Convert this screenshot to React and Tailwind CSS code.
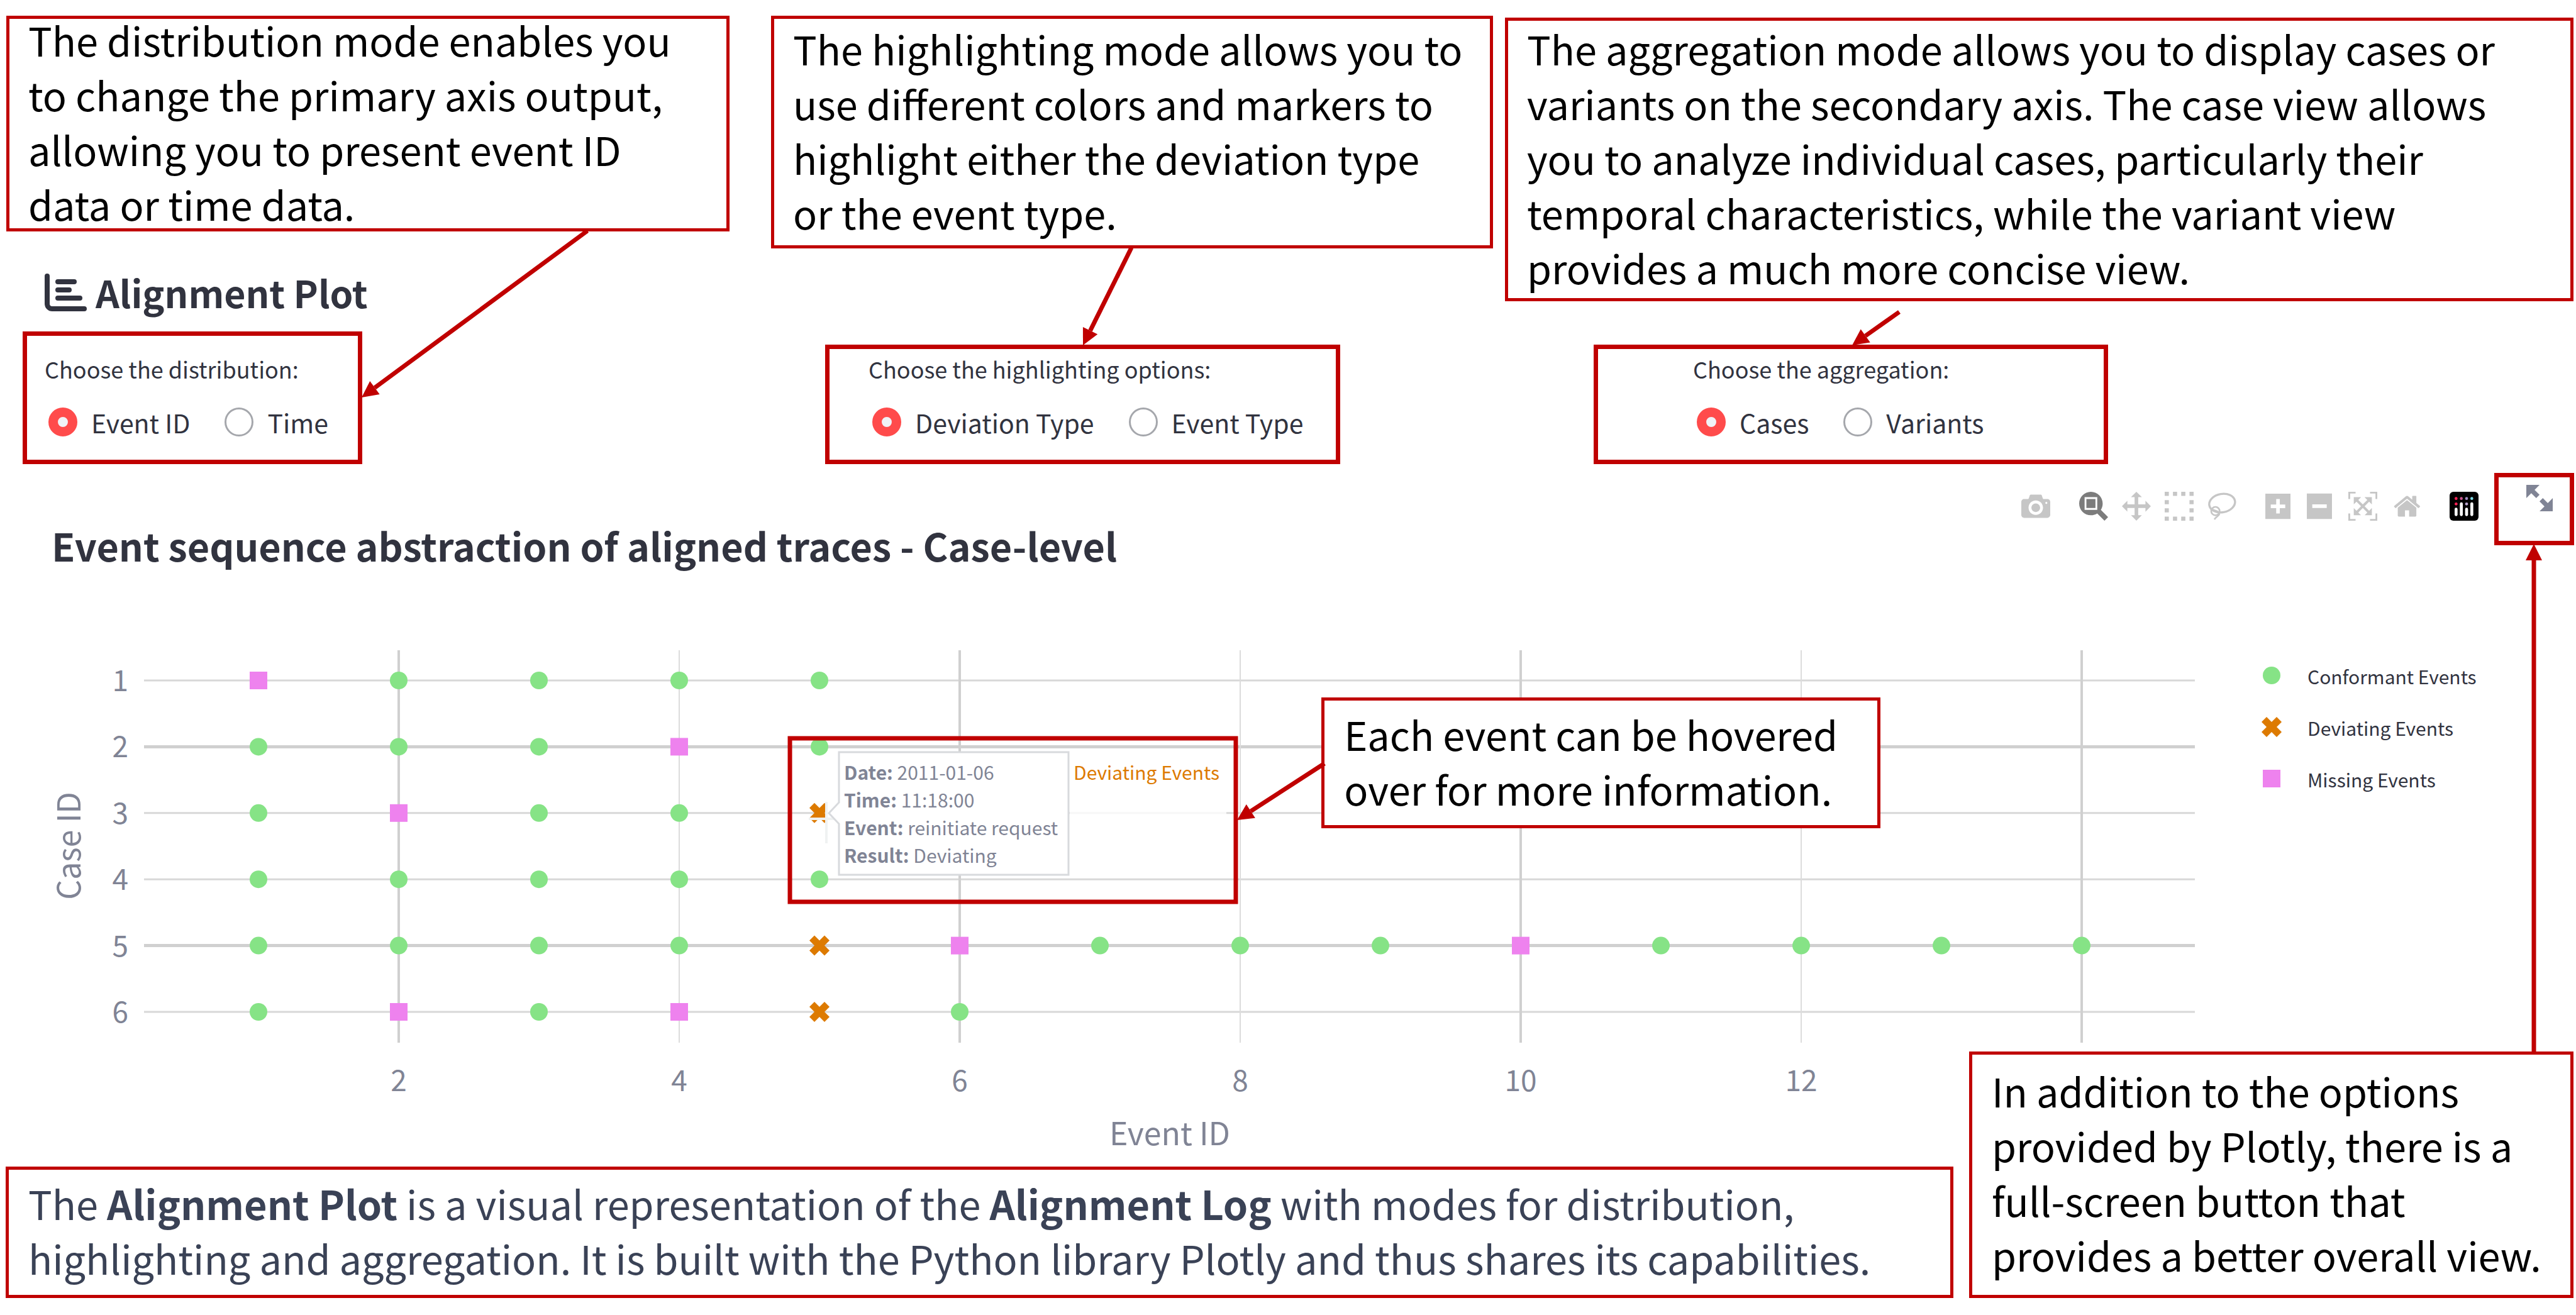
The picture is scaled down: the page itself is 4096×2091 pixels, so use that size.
import React from "react";

const FONT = "font-['Noto_Sans_CJK_SC','Open_Sans',sans-serif]";

const ICONS = {
  camera: {
    w: 1000,
    d: "m500 450c-83 0-150-67-150-150 0-83 67-150 150-150 83 0 150 67 150 150 0 83-67 150-150 150z m400 150h-120c-16 0-34 13-39 29l-31 93c-6 15-23 28-40 28h-340c-16 0-34-13-39-28l-31-94c-6-15-23-28-40-28h-120c-55 0-100-45-100-100v-450c0-55 45-100 100-100h800c55 0 100 45 100 100v450c0 55-45 100-100 100z m-400-550c-138 0-250 112-250 250 0 138 112 250 250 250 138 0 250-112 250-250 0-138-112-250-250-250z m365 380c-19 0-35 16-35 35 0 19 16 35 35 35 19 0 35-16 35-35 0-19-16-35-35-35z",
  },
  zoom: {
    w: 1000,
    d: "m1000-25l-250 251c40 63 63 138 63 218 0 224-182 406-407 406-224 0-406-182-406-406s183-406 407-406c80 0 155 22 218 62l250-250 125 125z m-812 250l0 438 437 0 0-438-437 0z m62 375l313 0 0-312-313 0 0 312z",
  },
  pan: {
    w: 1000,
    d: "m1000 350l-187 188 0-125-250 0 0 250 125 0-188 187-187-187 125 0 0-250-250 0 0 125-188-188 186-187 0 125 252 0 0-250-125 0 187-188 188 188-125 0 0 250 250 0 0-126 187 188z",
  },
  select: {
    w: 1000,
    d: "m0 850l0-143 143 0 0 143-143 0z m286 0l0-143 143 0 0 143-143 0z m285 0l0-143 143 0 0 143-143 0z m286 0l0-143 143 0 0 143-143 0z m-857-286l0-143 143 0 0 143-143 0z m857 0l0-143 143 0 0 143-143 0z m-857-285l0-143 143 0 0 143-143 0z m857 0l0-143 143 0 0 143-143 0z m-857-286l0-143 143 0 0 143-143 0z m286 0l0-143 143 0 0 143-143 0z m285 0l0-143 143 0 0 143-143 0z m286 0l0-143 143 0 0 143-143 0z",
  },
  zoomIn: {
    w: 875,
    d: "m1 787l0-875 875 0 0 875-875 0z m687-500l-187 0 0-187-125 0 0 187-188 0 0 125 188 0 0 187 125 0 0-187 187 0 0-125z",
  },
  zoomOut: {
    w: 875,
    d: "m0 788l0-876 875 0 0 876-875 0z m688-500l-500 0 0 125 500 0 0-125z",
  },
  autoscale: {
    w: 1000,
    d: "m250 850l-187 0-63 0 0-62 0-188 63 0 0 188 187 0 0 62z m688 0l-188 0 0-62 188 0 0-188 62 0 0 188 0 62-62 0z m-875-938l0 188-63 0 0-188 0-62 63 0 187 0 0 62-187 0z m875 188l0-188-188 0 0-62 188 0 62 0 0 62 0 188-62 0z m-125 188l-1 0-93-94-156 156 156 156 92-93 2 0 0 250-250 0 0-2 93-92-156-156-156 156 94 92 0 2-250 0 0-250 0 0 93 93 157-156-157-156-93 94 0 0 0-250 250 0 0 0-94 93 156 157 156-157-93-93 0 0 250 0 0 250z",
  },
  home: {
    w: 929,
    d: "m786 296v-267q0-15-11-26t-25-10h-214v214h-143v-214h-214q-15 0-25 10t-11 26v267q0 1 0 2t0 2l321 264 321-264q1-1 1-4z m124 39l-34-41q-5-5-12-6h-2q-7 0-12 3l-386 322-386-322q-7-4-13-4-7 2-12 7l-35 41q-4 5-3 13t6 12l401 334q18 15 42 15t43-15l136-114v109q0 8 5 13t13 5h107q8 0 13-5t5-13v-227l122-102q5-5 6-12t-4-13z",
  },
};

function ModeButton({ icon, label, active }) {
  const { w, d } = ICONS[icon];
  return (
    <button type="button" aria-label={label} className={active ? "text-[#7c7c7c]" : "text-[#c6c6c6]"}>
      <svg viewBox={`0 0 ${w} 1000`} className="block h-[46px] w-auto" fill="currentColor">
        <path transform="matrix(1 0 0 -1 0 850)" d={d} />
      </svg>
    </button>
  );
}

function LassoButton() {
  return (
    <button type="button" aria-label="Lasso Select" className="text-[#c6c6c6]">
      <svg viewBox="0 0 138 138" className="block size-[46px]" fill="none" stroke="currentColor">
        <ellipse cx="70" cy="54" rx="62" ry="44" strokeWidth="10" transform="rotate(-10 70 54)" />
        <circle cx="38" cy="92" r="20" strokeWidth="8" />
        <path d="M18 80C30 92 62 92 56 108C52 116 40 120 33 132" strokeWidth="8" />
      </svg>
    </button>
  );
}

function PlotlyLogo() {
  return (
    <a href="https://plotly.com/" aria-label="Produced with Plotly">
      <svg viewBox="0 0 138 138" className="block size-[46px]">
        <rect width="138" height="138" rx="18" />
        <circle cx="31" cy="32" r="7" fill="#ff2257" />
        <circle cx="56" cy="32" r="7" fill="#c9558f" />
        <circle cx="81" cy="32" r="7" fill="#a28fc4" />
        <circle cx="106" cy="32" r="7" fill="#7fdbe6" />
        <circle cx="31" cy="58" r="7" fill="#ff2257" />
        <circle cx="81" cy="58" r="7" fill="#b9a6d0" />
        <g fill="#fff">
          <rect x="24" y="76" width="14" height="40" rx="7" />
          <rect x="49" y="50" width="14" height="66" rx="7" />
          <rect x="74" y="76" width="14" height="40" rx="7" />
          <rect x="99" y="50" width="14" height="66" rx="7" />
        </g>
      </svg>
    </a>
  );
}

function Callout({ className, lines }) {
  return (
    <aside className={`border-[5px] border-[#c00000] bg-white ${className}`}>
      {lines.map((line, i) => (
        <p key={i} className="text-[63px] leading-[87px] whitespace-nowrap">
          {line}
        </p>
      ))}
    </aside>
  );
}

function RadioGroup({ name, label, options, className }) {
  return (
    <div
      role="radiogroup"
      aria-labelledby={`${name}-label`}
      className={`border-[7px] border-[#c00000] pb-[30px] whitespace-nowrap text-[#31333f] ${className}`}
    >
      <div id={`${name}-label`} className="text-[36px] leading-[50px]">
        {label}
      </div>
      <div className="mt-[30px] ml-[6px] flex gap-[55px]">
        {options.map((o, i) => (
          <label key={o} className="flex items-center gap-[22px] text-[41px] leading-[60px]">
            <input
              type="radio"
              name={name}
              defaultChecked={i === 0}
              className="size-[46px] appearance-none rounded-full border-[3px] border-[#a5a7ac] bg-white checked:border-[15px] checked:border-[#ff4b4b] checked:bg-[#f0f2f6]"
            />
            {o}
          </label>
        ))}
      </div>
    </div>
  );
}

const px = (n) => 634 + 223 * (n - 2);
const py = (n) => 1083 + 105.4 * (n - 1);

/* c: conformant, d: deviating, m: missing */
const TRACES = ["mcccc", "cccmc", "cmccd", "ccccc", "ccccdmcccmcccc", "cmcmdc"];

function Marker({ kind, x, y }) {
  if (kind === "c") return <circle cx={x} cy={y} r="14" fill="#86e386" />;
  if (kind === "m") return <rect x={x - 14} y={y - 14} width="28" height="28" fill="#ee82ee" />;
  return (
    <path
      transform={`translate(${x} ${y})`}
      d="M0 8l8 8 8-8-8-8 8-8-8-8-8 8-8-8-8 8 8 8-8 8 8 8Z"
      fill="#dd7a00"
    />
  );
}

const LEGEND = [
  ["c", "Conformant Events"],
  ["d", "Deviating Events"],
  ["m", "Missing Events"],
];

const HOVER = [
  ["Date:", "2011-01-06"],
  ["Time:", "11:18:00"],
  ["Event:", "reinitiate request"],
  ["Result:", "Deviating"],
];

function Chart() {
  return (
    <svg viewBox="0 908 4096 949" className="block w-full" role="img" aria-label="Aligned traces by case and event">
      {[1, 2, 3, 4, 5, 6].map((r) => (
        <line
          key={r}
          x1="229"
          x2="3490"
          y1={py(r)}
          y2={py(r)}
          stroke={r === 2 || r === 5 ? "#d0d0d0" : "#d8d8d8"}
          strokeWidth={r === 2 || r === 5 ? 5 : 3}
        />
      ))}
      {[2, 4, 6, 8, 10, 12, 14].map((n) => (
        <line
          key={n}
          x1={px(n)}
          x2={px(n)}
          y1="1035"
          y2="1659"
          stroke={n % 4 === 2 ? "#d0d0d0" : "#dcdcdc"}
          strokeWidth={n % 4 === 2 ? 4 : 2}
        />
      ))}
      {TRACES.map((t, r) =>
        [...t].map((k, i) => <Marker key={`${r}-${i}`} kind={k} x={px(i + 1)} y={py(r + 1)} />)
      )}

      <g fill="#808495" fontSize="46">
        {[1, 2, 3, 4, 5, 6].map((r) => (
          <text key={r} x="204" y={py(r) + 17} textAnchor="end">
            {r}
          </text>
        ))}
        {[2, 4, 6, 8, 10, 12].map((n) => (
          <text key={n} x={px(n)} y="1736" textAnchor="middle">
            {n}
          </text>
        ))}
      </g>
      <g fill="#808495" fontSize="50" textAnchor="middle">
        <text x="1860" y="1822">Event ID</text>
        <text transform="translate(128 1346) rotate(-90)">Case ID</text>
      </g>

      {LEGEND.map(([k, name], i) => (
        <g key={k}>
          <Marker kind={k} x={3612} y={1075 + 82 * i} />
          <text x="3669" y={1089 + 82 * i} fontSize="30" fill="#31333f">
            {name}
          </text>
        </g>
      ))}

      <g>
        <path d="M1701 1294H1950" stroke="#fff" strokeOpacity="0.8" strokeWidth="5" />
        <path d="M1317 1275V1330" stroke="#fff" strokeWidth="8" />
        <path d="M1314 1276V1342M1286 1303H1341" stroke="#f0f2f2" strokeWidth="4" />
        <path
          d="M1318 1294L1334 1277V1197H1699V1392H1334V1311Z"
          fill="#fff"
          stroke="#d8dadd"
          strokeWidth="3"
        />
        {HOVER.map(([k, v], i) => (
          <text key={k} x="1342" y={1241 + 44 * i} fontSize="30" fill="#808495">
            <tspan fontWeight="700">{k}</tspan> {v}
          </text>
        ))}
        <text x="1707" y="1241" fontSize="30" fill="#dd7a00">
          Deviating Events
        </text>
        <rect x="1256" y="1175" width="709" height="260" fill="none" stroke="#c00000" strokeWidth="7" />
      </g>
    </svg>
  );
}

function Arrow({ from, to }) {
  const [x1, y1] = from;
  const [x2, y2] = to;
  const len = Math.hypot(x2 - x1, y2 - y1);
  const ux = (x2 - x1) / len;
  const uy = (y2 - y1) / len;
  const bx = x2 - ux * 26;
  const by = y2 - uy * 26;
  return (
    <g>
      <path d={`M${x1} ${y1}L${bx} ${by}`} stroke="#c00000" strokeWidth="7" />
      <path
        d={`M${x2} ${y2}L${bx - uy * 13} ${by + ux * 13}L${bx + uy * 13} ${by - ux * 13}Z`}
        fill="#c00000"
      />
    </g>
  );
}

export default function App() {
  return (
    <main className={`relative overflow-hidden bg-white text-black ${FONT}`}>
      <div className="grid grid-cols-[1150fr_66fr_1148fr_19fr_1699fr] items-start pt-[25px] pr-[4px] pl-[10px]">
        <div>
          <Callout
            className="pl-[30px] [&>p:first-child]:-mt-[11px] [&>p:last-child]:-mb-[4px]"
            lines={[
              "The distribution mode enables you",
              "to change the primary axis output,",
              "allowing you to present event ID",
              "data or time data.",
            ]}
          />
          <h1 className="mt-[57px] flex items-center gap-[14px] pb-[22px] pl-[61px] text-[59px] leading-[80px] font-semibold text-[#31333f]">
            <svg
              viewBox="0 0 67 60"
              className="w-[67px]"
              fill="none"
              stroke="currentColor"
              strokeWidth="8"
              strokeLinecap="round"
            >
              <path d="M4 4V48a8 8 0 0 0 8 8H63M21 13H47M21 26H39M21 39H56" />
            </svg>
            Alignment Plot
          </h1>
        </div>
        <Callout
          className="col-start-3 pt-[3px] pb-[9px] pl-[30px]"
          lines={[
            "The highlighting mode allows you to",
            "use different colors and markers to",
            "highlight either the deviation type",
            "or the event type.",
          ]}
        />
        <Callout
          className="col-start-5 mt-[3px] pb-[6px] pl-[30px]"
          lines={[
            "The aggregation mode allows you to display cases or",
            "variants on the secondary axis. The case view allows",
            "you to analyze individual cases, particularly their",
            "temporal characteristics, while the variant view",
            "provides a much more concise view.",
          ]}
        />
      </div>

      <div className="grid grid-cols-[36fr_540fr_736fr_819fr_403fr_818fr_744fr] items-end">
        <RadioGroup
          name="distribution"
          label="Choose the distribution:"
          options={["Event ID", "Time"]}
          className="col-start-2 pt-[27px] pl-[28px]"
        />
        <RadioGroup
          name="highlighting"
          label="Choose the highlighting options:"
          options={["Deviation Type", "Event Type"]}
          className="col-start-4 pt-[6px] pl-[62px]"
        />
        <RadioGroup
          name="aggregation"
          label="Choose the aggregation:"
          options={["Cases", "Variants"]}
          className="col-start-6 pt-[6px] pl-[151px]"
        />
      </div>

      <div className="flex items-start justify-between pr-[3px] pl-[82px]">
        <h2 className="mt-[89px] text-[61px] leading-[80px] font-bold text-[#31333f]">
          Event sequence abstraction of aligned traces - Case-level
        </h2>
        <div className="flex items-start">
          <div className="mt-[44px] mr-[25px] flex gap-[46px]">
            <ModeButton icon="camera" label="Download plot as a png" />
            <div className="flex gap-[22px]">
              <ModeButton icon="zoom" label="Zoom" active />
              <ModeButton icon="pan" label="Pan" />
              <ModeButton icon="select" label="Box Select" />
              <LassoButton />
            </div>
            <div className="flex gap-[26px]">
              <ModeButton icon="zoomIn" label="Zoom in" />
              <ModeButton icon="zoomOut" label="Zoom out" />
              <ModeButton icon="autoscale" label="Autoscale" />
              <ModeButton icon="home" label="Reset axes" />
            </div>
            <PlotlyLogo />
          </div>
          <div className="mt-[14px] border-[7px] border-[#c00000] pt-[12px] pr-[27px] pb-[47px] pl-[44px]">
            <button type="button" aria-label="View fullscreen" className="block text-[#808495]">
              <svg viewBox="0 0 8 8" className="block size-[42px]" fill="currentColor">
                <path d="M0 0v4l1.5-1.5 1.5 1.5 1-1-1.5-1.5 1.5-1.5h-4zm5 4l-1 1 1.5 1.5-1.5 1.5h4v-4l-1.5 1.5-1.5-1.5z" />
              </svg>
            </button>
          </div>
        </div>
      </div>

      <div className="relative">
        <Chart />
        <Callout
          className="absolute top-[21.3%] left-[51.3%] w-[21.7%] pt-[9px] pb-[15px] pl-[31px]"
          lines={["Each event can be hovered", "over for more information."]}
        />
      </div>

      <div className="relative -mt-[184px] grid grid-cols-[3097fr_25fr_961fr] items-end pr-[4px] pb-[26px] pl-[9px]">
        <Callout
          className="pt-[9px] pb-[16px] pl-[31px] text-[#3a4256]"
          lines={[
            <>
              The <b>Alignment Plot</b> is a visual representation of the <b>Alignment Log</b> with modes for
              distribution,
            </>,
            "highlighting and aggregation. It is built with the Python library Plotly and thus shares its capabilities.",
          ]}
        />
        <Callout
          className="col-start-3 pt-[13px] pb-[21px] pl-[31px]"
          lines={[
            "In addition to the options",
            "provided by Plotly, there is a",
            "full-screen button that",
            "provides a better overall view.",
          ]}
        />
      </div>

      <svg viewBox="0 0 4096 2091" className="pointer-events-none absolute top-0 left-0 w-full" fill="none" aria-hidden="true">
        <Arrow from={[934, 367]} to={[575, 632]} />
        <Arrow from={[1799, 394]} to={[1722, 549]} />
        <Arrow from={[3020, 496]} to={[2945, 549]} />
        <Arrow from={[2106, 1214]} to={[1967, 1304]} />
        <Arrow from={[4029, 1675]} to={[4029, 865]} />
      </svg>
    </main>
  );
}
